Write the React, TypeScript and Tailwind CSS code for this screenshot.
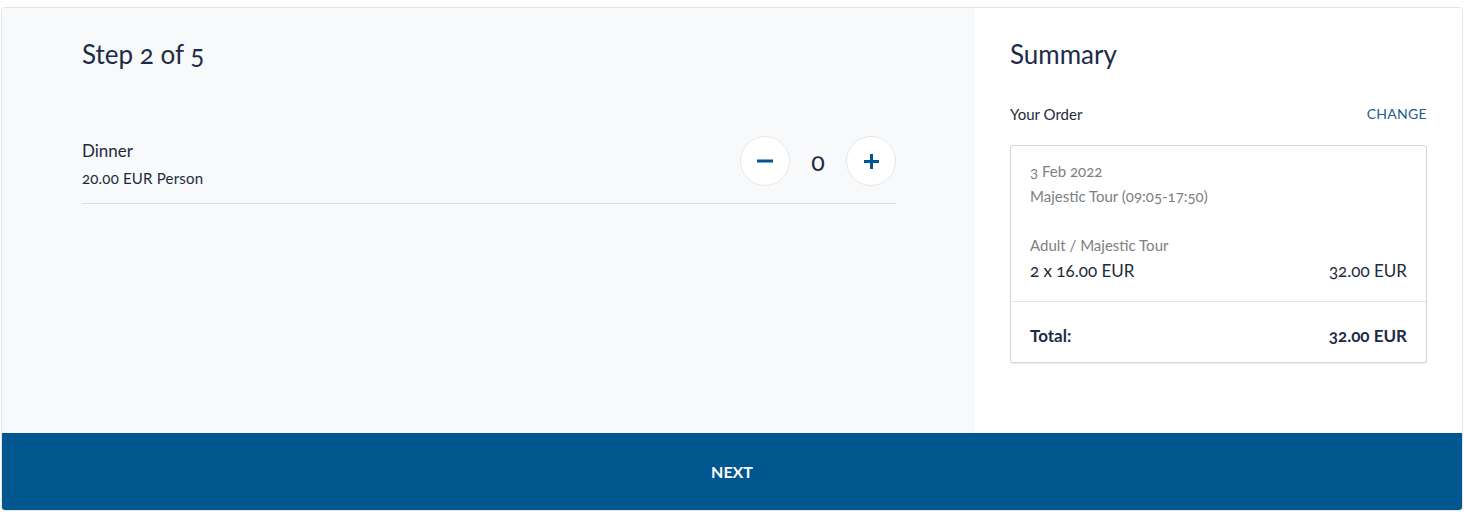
export default function App() {
  return (
    <div className="w-full h-[512px] bg-white pt-[7px] px-[1px] pb-[1px] font-['Lato',sans-serif] oldstyle-nums">
      <div className="h-full flex flex-col border border-[#e3e5e8] rounded-[4px] overflow-hidden">
        <div className="flex h-[425px]">
          {/* Left panel */}
          <div className="w-[973px] bg-[#f8f9fb] pt-[30px] pl-[80px] pr-[79px]">
            <h1 className="text-[26px] leading-[32px] text-[#1c2b48]">Step 2 of 5</h1>
            <div className="mt-[66px] flex justify-between items-start border-b border-[#dcdde0] pb-[15px]">
              <div className="mt-[3px]">
                <div className="text-[17px] leading-[24px] text-[#1e2a3b]">Dinner</div>
                <div className="mt-[5px] text-[15px] leading-[20px] tracking-[0.2px] text-[#1e2a3b]">20.00 EUR Person</div>
              </div>
              <div className="flex items-center">
                <button className="w-[50px] h-[50px] rounded-full bg-white border border-[#e6e7e9] flex items-center justify-center">
                  <svg width="16" height="16" viewBox="0 0 16 16">
                    <rect x="0" y="6.5" width="16" height="3" fill="#01568f" />
                  </svg>
                </button>
                <div className="w-[56px] text-center text-[25px] leading-[30px] text-[#1e2a3b]">0</div>
                <button className="w-[50px] h-[50px] rounded-full bg-white border border-[#e6e7e9] flex items-center justify-center">
                  <svg width="15" height="15" viewBox="0 0 15 15">
                    <rect x="0" y="6" width="15" height="3" fill="#01568f" />
                    <rect x="6" y="0" width="3" height="15" fill="#01568f" />
                  </svg>
                </button>
              </div>
            </div>
          </div>
          {/* Right panel */}
          <div className="flex-1 bg-white pt-[30px] px-[35px]">
            <h2 className="text-[26px] leading-[32px] text-[#1c2b48]">Summary</h2>
            <div className="mt-[34px] flex justify-between text-[15px] leading-[20px]">
              <span className="text-[#1e2a3b]">Your Order</span>
              <span className="text-[14px] text-[#1c5e8e] tracking-[0.3px]">CHANGE</span>
            </div>
            <div className="mt-[21px] border border-[#d4d6d9] rounded-[3px] shadow-[0_1px_1px_rgba(0,0,0,0.08)] bg-white">
              <div className="px-[19px] pt-[13px] pb-[18px] border-b border-[#e4e5e7]">
                <div className="text-[15px] leading-[25px] text-[#808080]">3 Feb 2022</div>
                <div className="text-[15px] leading-[25px] text-[#808080]">Majestic Tour (09:05-17:50)</div>
                <div className="mt-[24px] text-[15px] leading-[25px] text-[#808080]">Adult / Majestic Tour</div>
                <div className="flex justify-between text-[17px] leading-[25px] text-[#1e2a3b]">
                  <span>2 x 16.00 EUR</span>
                  <span>32.00 EUR</span>
                </div>
              </div>
              <div className="px-[19px] pt-[21px] pb-[14px] flex justify-between text-[17px] leading-[25px] font-bold text-[#1c2b48]">
                <span>Total:</span>
                <span>32.00 EUR</span>
              </div>
            </div>
          </div>
        </div>
        <button className="flex-1 w-full bg-[#00568f] text-white text-[16px] font-bold flex items-center justify-center">
          NEXT
        </button>
      </div>
    </div>
  );
}
